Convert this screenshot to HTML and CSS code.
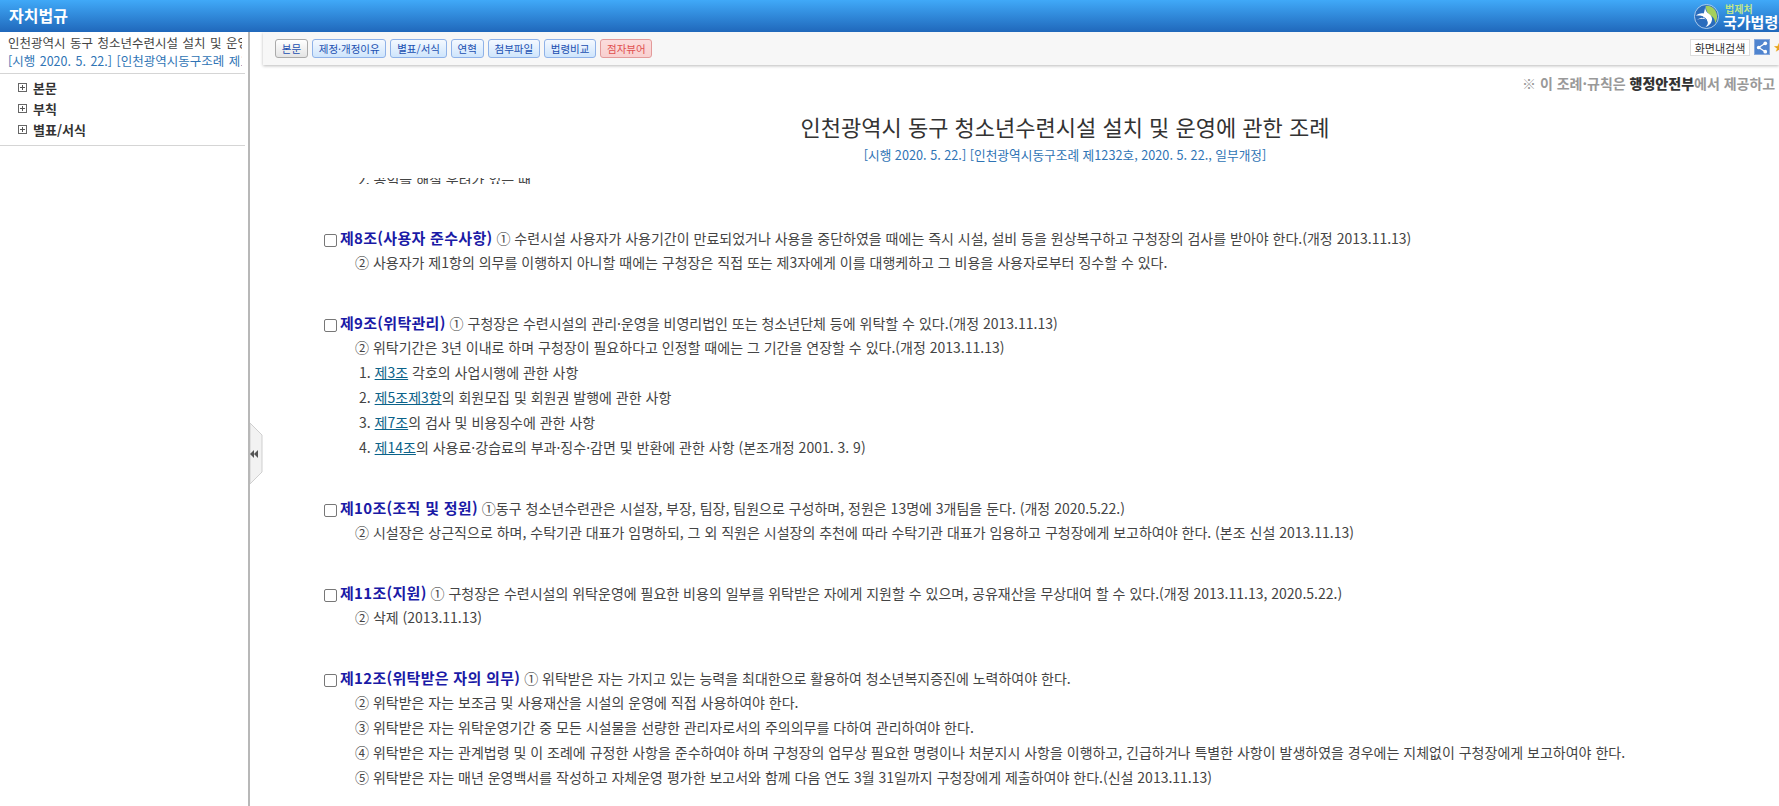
FILE: index.html
```html
<!DOCTYPE html>
<html lang="ko">
<head>
    <meta charset="UTF-8">
    <title>자치법규</title>
    <link rel="stylesheet" href="styles.css">
</head>
<body>
    <header class="top-bar">
        <div class="site-name">자치법규</div>
        <div class="brand">
            <svg class="brand-logo" width="25" height="25" viewBox="0 0 26 26">
                <circle cx="13" cy="13" r="12.500" fill="#2a6cbc" stroke="#cfe3f7" stroke-width="0.800"/>
                <path d="M12 2c6-1 12 4 12 11 0 3-1 5-2 7 0-5-3-7-6-9-2-2-3-3-4-9z" fill="#a5cf5c"/>
                <path d="M12 2c-1 4 1 6 3 8 3 2 5 5 3 9-1 2-3 4-6 5 2-2 3-4 2-6-1-3-5-3-11-2 3-1 6-2 7-3-2-1-5-1-8-1 3-2 6-3 8-2 1-2 1-5 2-8z" fill="#fff"/>
                <path d="M8 14c3 0 5 1 5 3s-2 4-5 6" fill="none" stroke="#2a6cbc" stroke-width="1"/>
            </svg>
            <div class="brand-text">
                <div class="brand-small">법제처</div>
                <div class="brand-big">국가법령정보센터</div>
            </div>
        </div>
    </header>
    <div class="layout">
        <aside class="sidebar">
            <div class="law-summary">
                <div class="law-name">인천광역시 동구 청소년수련시설 설치 및 운영에 관한 조례</div>
                <div class="law-date">[시행 2020. 5. 22.] [인천광역시동구조례 제1232호, 2020. 5. 22., 일부개정]</div>
            </div>
            <ul class="tree">
                <li><span class="plus"></span>본문</li>
                <li><span class="plus"></span>부칙</li>
                <li><span class="plus"></span>별표/서식</li>
            </ul>
        </aside>
        <main class="content">
            <div class="toggle">
                <svg width="17" height="62" viewBox="0 0 17 62">
                    <path d="M0 0L12 12V49L0 61Z" fill="#f2f2f2" stroke="#cfcfcf"/>
                    <path d="M0 31L4 27V35ZM4 31L8 27V35Z" fill="#555"/>
                </svg>
            </div>
            <div class="toolbar">
                <div class="tabs">
                    <button class="tab tab-current">본문</button>
                    <button class="tab">제정·개정이유</button>
                    <button class="tab">별표/서식</button>
                    <button class="tab">연혁</button>
                    <button class="tab">첨부파일</button>
                    <button class="tab">법령비교</button>
                    <button class="tab tab-red">점자뷰어</button>
                </div>
                <div class="tools">
                    <button class="find">화면내검색</button>
                    <span class="share">
                        <svg width="15" height="15" viewBox="0 0 15 15">
                            <path d="M11 3L4 7.500L11 12" fill="none" stroke="#fff" stroke-width="1.300"/>
                            <circle cx="11" cy="3" r="2" fill="#fff"/>
                            <circle cx="4" cy="7.500" r="2" fill="#fff"/>
                            <circle cx="11" cy="12" r="2" fill="#fff"/>
                        </svg>
                    </span>
                    <span class="star">★</span>
                </div>
            </div>
            <div class="notice">※ 이 조례·규칙은 <b>행정안전부</b>에서 제공하고 있습니다.</div>
            <h1 class="title">인천광역시 동구 청소년수련시설 설치 및 운영에 관한 조례</h1>
            <div class="subtitle">[시행 2020. 5. 22.] [인천광역시동구조례 제1232호, 2020. 5. 22., 일부개정]</div>
            <div class="body-scroll">
                <div class="cut-line">2. 공익을 해칠 우려가 있는 때</div>

                <section class="article">
                    <p class="line-first"><input type="checkbox"><b>제8조(사용자 준수사항)</b> ① 수련시설 사용자가 사용기간이 만료되었거나 사용을 중단하였을 때에는 즉시 시설, 설비 등을 원상복구하고 구청장의 검사를 받아야 한다.(개정 2013.11.13)</p>
                    <p class="para">② 사용자가 제1항의 의무를 이행하지 아니할 때에는 구청장은 직접 또는 제3자에게 이를 대행케하고 그 비용을 사용자로부터 징수할 수 있다.</p>
                </section>

                <section class="article">
                    <p class="line-first"><input type="checkbox"><b>제9조(위탁관리)</b> ① 구청장은 수련시설의 관리·운영을 비영리법인 또는 청소년단체 등에 위탁할 수 있다.(개정 2013.11.13)</p>
                    <p class="para">② 위탁기간은 3년 이내로 하며 구청장이 필요하다고 인정할 때에는 그 기간을 연장할 수 있다.(개정 2013.11.13)</p>
                    <p class="item">1. <a href="#">제3조</a> 각호의 사업시행에 관한 사항</p>
                    <p class="item">2. <a href="#">제5조제3항</a>의 회원모집 및 회원권 발행에 관한 사항</p>
                    <p class="item">3. <a href="#">제7조</a>의 검사 및 비용징수에 관한 사항</p>
                    <p class="item">4. <a href="#">제14조</a>의 사용료·강습료의 부과·징수·감면 및 반환에 관한 사항 (본조개정 2001. 3. 9)</p>
                </section>

                <section class="article">
                    <p class="line-first"><input type="checkbox"><b>제10조(조직 및 정원)</b> ①동구 청소년수련관은 시설장, 부장, 팀장, 팀원으로 구성하며, 정원은 13명에 3개팀을 둔다. (개정 2020.5.22.)</p>
                    <p class="para">② 시설장은 상근직으로 하며, 수탁기관 대표가 임명하되, 그 외 직원은 시설장의 추천에 따라 수탁기관 대표가 임용하고 구청장에게 보고하여야 한다. (본조 신설 2013.11.13)</p>
                </section>

                <section class="article">
                    <p class="line-first"><input type="checkbox"><b>제11조(지원)</b> ① 구청장은 수련시설의 위탁운영에 필요한 비용의 일부를 위탁받은 자에게 지원할 수 있으며, 공유재산을 무상대여 할 수 있다.(개정 2013.11.13, 2020.5.22.)</p>
                    <p class="para">② 삭제 (2013.11.13)</p>
                </section>

                <section class="article">
                    <p class="line-first"><input type="checkbox"><b>제12조(위탁받은 자의 의무)</b> ① 위탁받은 자는 가지고 있는 능력을 최대한으로 활용하여 청소년복지증진에 노력하여야 한다.</p>
                    <p class="para">② 위탁받은 자는 보조금 및 사용재산을 시설의 운영에 직접 사용하여야 한다.</p>
                    <p class="para">③ 위탁받은 자는 위탁운영기간 중 모든 시설물을 선량한 관리자로서의 주의의무를 다하여 관리하여야 한다.</p>
                    <p class="para">④ 위탁받은 자는 관계법령 및 이 조례에 규정한 사항을 준수하여야 하며 구청장의 업무상 필요한 명령이나 처분지시 사항을 이행하고, 긴급하거나 특별한 사항이 발생하였을 경우에는 지체없이 구청장에게 보고하여야 한다.</p>
                    <p class="para">⑤ 위탁받은 자는 매년 운영백서를 작성하고 자체운영 평가한 보고서와 함께 다음 연도 3월 31일까지 구청장에게 제출하여야 한다.(신설 2013.11.13)</p>
                </section>
            </div>
        </main>
    </div>
</body>
</html>
```

FILE: styles.css
```css
/* General styles */
html, body {
    height: 100%;
}

body {
    margin: 0;
    font-family: "Noto Sans CJK KR", "Liberation Sans", sans-serif;
    font-size: 14px;
    color: #444;
    background: #fff;
    overflow: hidden;
}

/* Top bar */
.top-bar {
    height: 32px;
    display: flex;
    justify-content: space-between;
    background: linear-gradient(#40a9f8, #2068bb);
    overflow: hidden;
}

.site-name {
    padding: 5px 0 0 9px;
    color: #fff;
    font-size: 16px;
    line-height: 20px;
    font-weight: bold;
}

.brand {
    width: 85px;
    flex-shrink: 0;
    display: flex;
    gap: 6px;
    padding-top: 4px;
    white-space: nowrap;
    overflow: hidden;
}

.brand-logo {
    flex-shrink: 0;
}

.brand-small {
    margin-top: -1px;
    color: #bfe58a;
    font-size: 10px;
    line-height: 11px;
    font-weight: bold;
}

.brand-big {
    margin-left: -2px;
    color: #fff;
    font-size: 15px;
    line-height: 16px;
    font-weight: bold;
}

.layout {
    display: flex;
    height: calc(100% - 32px);
}

/* Sidebar */
.sidebar {
    width: 250px;
    box-sizing: border-box;
    flex-shrink: 0;
    border-right: 2px solid #b8b8b8;
    overflow: hidden;
}

.law-summary {
    height: 42px;
    box-sizing: border-box;
    margin-right: 3px;
    padding: 2px 3px 0 8px;
    border-bottom: 1px solid #d5d5d5;
    line-height: 18px;
    font-size: 12.500px;
    word-spacing: 1px;
}

.law-name, .law-date {
    white-space: nowrap;
    overflow: hidden;
}

.law-date {
    color: #2f74b5;
}

.tree {
    list-style: none;
    margin: 0 3px 0 0;
    padding: 3px 0 5px 18px;
    border-bottom: 1px solid #d5d5d5;
}

.tree li {
    display: flex;
    align-items: center;
    height: 21px;
    font-weight: bold;
    font-size: 13px;
    color: #333;
}

.plus {
    width: 7px;
    height: 7px;
    margin-right: 6px;
    border: 1px solid #666;
    background:
        linear-gradient(#555, #555) center / 5px 1px no-repeat,
        linear-gradient(#555, #555) center / 1px 5px no-repeat;
}

/* Content */
.content {
    position: relative;
    flex: 1;
    min-width: 0;
    overflow: hidden;
}

.toggle {
    position: absolute;
    left: 0;
    top: 391px;
    line-height: 0;
}

.toolbar {
    height: 33px;
    margin-left: 13px;
    display: flex;
    justify-content: space-between;
    align-items: flex-start;
    padding: 7px 0 0 12px;
    box-sizing: border-box;
    background: #f7f7f7;
    box-shadow: 0 1px 3px #bbb;
}

.tabs {
    display: flex;
    gap: 4px;
}

.tab {
    height: 19px;
    padding: 0 5.800px;
    border: 1px solid #8fb2e8;
    border-radius: 3px;
    background: linear-gradient(#f4f9ff, #cfe5fc);
    color: #1a4fb0;
    font-family: inherit;
    font-size: 10.500px;
    line-height: 16px;
}

.tab-current {
    border-color: #aaa;
    background: linear-gradient(#fff, #e4e4e4);
}

.tab-red {
    border-color: #e39a9a;
    background: linear-gradient(#fbdcdc, #f8d0d0);
    color: #e05050;
}

.tools {
    display: flex;
    align-items: flex-start;
    gap: 4px;
    height: 17px;
    margin-right: -2px;
    white-space: nowrap;
}

.find {
    height: 17px;
    width: 60px;
    padding: 0;
    border: 1px solid #ddd;
    background: #fff;
    color: #333;
    font-family: inherit;
    font-size: 11px;
    line-height: 14px;
}

.share {
    width: 16px;
    height: 16px;
    display: flex;
    background: #4f84cf;
    border: 1px solid #88a9dc;
    box-sizing: border-box;
    align-items: center;
    justify-content: center;
}

.star {
    width: 7px;
    color: #e8a020;
    font-size: 10px;
    line-height: 16px;
    overflow: hidden;
}

.notice {
    margin: 8px 0 0 13px;
    height: 23px;
    line-height: 20px;
    color: #999;
    font-size: 14px;
    font-weight: bold;
    white-space: nowrap;
    padding-left: 1259px;
}

.notice b {
    color: #333;
}

.title {
    margin: 17px 0 0 101px;
    text-align: center;
    font-size: 22px;
    line-height: 26px;
    font-weight: normal;
    color: #333;
}

.subtitle {
    margin: 6px 0 0 101px;
    text-align: center;
    font-size: 12.700px;
    line-height: 19px;
    color: #2f74b5;
}

.body-scroll {
    height: 620px;
    margin-top: 14px;
    padding-left: 74px;
    overflow: hidden;
    white-space: nowrap;
}

.cut-line {
    height: 6px;
    margin-left: 34px;
    line-height: 2px;
    overflow: hidden;
}

.article {
    margin-bottom: 35px;
}

.article:first-of-type {
    margin-top: 41px;
}

.article p {
    margin: 0;
    height: 25px;
    line-height: 25px;
}

.line-first input {
    appearance: none;
    box-sizing: border-box;
    width: 13px;
    height: 13px;
    margin: 0 3px 0 0;
    border: 1px solid #777;
    border-radius: 2px;
    background: #fff;
    vertical-align: -3px;
}

.line-first b {
    color: #1a1aa6;
    font-size: 15px;
    letter-spacing: 0.3px;
}

.para {
    padding-left: 31px;
}

.item {
    padding-left: 35px;
}

.item a {
    color: #0b6289;
}
```
